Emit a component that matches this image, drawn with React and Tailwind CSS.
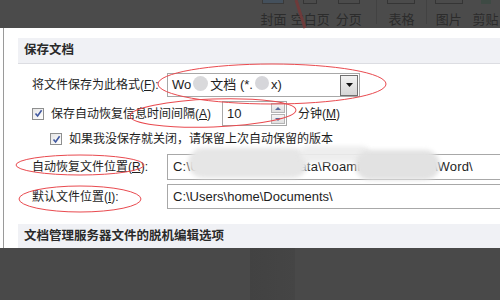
import React from 'react';

const font = "font-['Liberation_Sans','Noto_Sans_CJK_SC',sans-serif]";

function Check() {
    return (
        <span className="w-[12px] h-[12px] border border-[#8e8f8f] bg-gradient-to-br from-[#e6e6e6] to-[#ffffff] flex items-center justify-center shrink-0">
            <svg width="9" height="9" viewBox="0 0 9 9"><path d="M1.5 4.5 L3.6 7 L7.6 1.3" fill="none" stroke="#4058a0" strokeWidth="1.6" /></svg>
        </span>
    );
}

function RibbonItem({ label, w, icon }) {
    return (
        <div className="flex flex-col items-center" style={{ width: w }}>
            <div className="h-[5px] w-full flex justify-center">{icon}</div>
            <span className="mt-[8px] text-[13px] leading-[14px] text-[#2c2c2c]">{label}</span>
        </div>
    );
}

export default function App() {
    return (
        <div className={`w-[500px] h-[300px] relative overflow-hidden bg-white text-[#1e1e1e] ${font}`}>
            {/* ribbon behind the dialog */}
            <div className="h-[28px] bg-[#4b4b4b] flex pl-[258px]">
                <RibbonItem w={32} label="封面" icon={<div className="w-[22px] h-[4px] bg-[#44505c] border-b border-x border-[#3a3a3a]" />} />
                <RibbonItem w={44} label="空白页" icon={<div className="w-[14px] h-[4px] border-b border-x border-[#353535]" />} />
                <RibbonItem w={36} label="分页" icon={<div className="w-[22px] h-[4px] border-b border-x border-[#353535]" />} />
                <div className="w-px h-[24px] bg-[#424242] ml-[10px]" />
                <RibbonItem w={50} label="表格" icon={<div className="w-[28px] h-[4px] border-b border-x border-[#353535]" />} />
                <div className="w-px h-[24px] bg-[#424242]" />
                <RibbonItem w={46} label="图片" icon={<div className="w-[28px] h-[4px] border-b border-x border-[#353535]" />} />
                <RibbonItem w={30} label="剪贴" icon={<div className="w-[10px] h-[4px] bg-[#3e4a44]" />} />
            </div>

            {/* dialog body */}
            <div className="h-[220px] flex">
                <div className="w-[4px] border-r border-[#9a9a9a] shrink-0" />
                <div className="flex-1 pl-[14px] pt-[10px] text-[12px]">
                    <div className="h-[26px] bg-[#f0f1f5] border-b border-[#dcdde2] flex items-center pl-[6px] font-bold text-[12.5px] text-[#2a2a2a]">
                        保存文档
                    </div>

                    <div className="pl-[14px]">
                        <div className="mt-[9px] flex items-center h-[24px]">
                            <span className="w-[135px]">将文件保存为此格式(<u>F</u>):</span>
                            <div className="w-[193px] h-[24px] border border-[#a8a8a8] flex items-center justify-between pl-[4px] pr-[1px]">
                                <span className="text-[13px] flex items-center">
                                    Wo
                                    <span className="inline-block w-[15px] h-[15px] rounded-full bg-[#d9d9db] mx-[2px] -mt-[3px]" />
                                    文档 (*.
                                    <span className="inline-block w-[14px] h-[14px] rounded-full bg-[#d6d6da] mx-[2px] -mt-[4px]" />
                                    x)
                                </span>
                                <div className="w-[18px] h-[21px] border border-[#707070] bg-gradient-to-b from-[#f2f2f2] to-[#d6d6d6] flex items-center justify-center">
                                    <svg width="7" height="4" viewBox="0 0 7 4"><path d="M0 0 H7 L3.5 4 Z" fill="#111" /></svg>
                                </div>
                            </div>
                        </div>

                        <div className="mt-[4px] flex items-center h-[25px]">
                            <Check />
                            <span className="ml-[7px] w-[171px]">保存自动恢复信息时间间隔(<u>A</u>)</span>
                            <div className="w-[65px] h-[25px] border border-[#a8a8a8] flex items-center justify-between pl-[4px] pr-[1px]">
                                <span className="text-[13px]">10</span>
                                <div className="flex flex-col gap-px">
                                    <div className="w-[14px] h-[10px] border border-[#b4b4b4] bg-gradient-to-b from-[#f4f4f4] to-[#e0e0e0] flex items-center justify-center">
                                        <svg width="6" height="3" viewBox="0 0 6 3"><path d="M0 3 H6 L3 0 Z" fill="#5a6a9a" /></svg>
                                    </div>
                                    <div className="w-[14px] h-[10px] border border-[#b4b4b4] bg-gradient-to-b from-[#f4f4f4] to-[#e0e0e0] flex items-center justify-center">
                                        <svg width="6" height="3" viewBox="0 0 6 3"><path d="M0 0 H6 L3 3 Z" fill="#5a6a9a" /></svg>
                                    </div>
                                </div>
                            </div>
                            <span className="ml-[11px]">分钟(<u>M</u>)</span>
                        </div>

                        <div className="mt-[5px] flex items-center h-[16px] pl-[18px]">
                            <Check />
                            <span className="ml-[7px]">如果我没保存就关闭，请保留上次自动保留的版本</span>
                        </div>

                        <div className="mt-[7px] flex items-center h-[26px]">
                            <span className="w-[135px]">自动恢复文件位置(<u>R</u>):</span>
                            <div className="flex-1 h-[26px] border-y border-l border-[#a8a8a8] flex items-center pl-[5px] text-[13px] tracking-[0.2px] whitespace-nowrap overflow-hidden">
                                C:\Users\home\AppData\Roaming\Microsoft\Word\
                            </div>
                        </div>

                        <div className="mt-[4px] flex items-center h-[25px]">
                            <span className="w-[135px]">默认文件位置(<u>I</u>):</span>
                            <div className="flex-1 h-[25px] border-y border-l border-[#a8a8a8] flex items-center pl-[5px] text-[13px] whitespace-nowrap overflow-hidden">
                                C:\Users\home\Documents\
                            </div>
                        </div>
                    </div>

                    <div className="mt-[15px] h-[24px] bg-[#f0f1f5] flex items-center pl-[6px] font-bold text-[12.5px] text-[#2a2a2a]">
                        文档管理服务器文件的脱机编辑选项
                    </div>
                </div>
            </div>

            {/* area below the dialog */}
            <div className="h-[52px] flex">
                <div className="w-[250px] bg-[#494949]" />
                <div className="w-[45px] bg-gradient-to-r from-[#424242] to-[#454545]" />
                <div className="flex-1 bg-[#494949]" />
            </div>

            {/* blur smudge over the path */}
            <div className="absolute left-[188px] top-[148px] w-[120px] h-[30px] rounded-full bg-[#e6e6e6] blur-[2px]" />
            <div className="absolute left-[300px] top-[146px] w-[70px] h-[16px] rounded-full bg-[#ececec]/90 blur-[2px]" />
            <div className="absolute left-[355px] top-[150px] w-[85px] h-[30px] rounded-full bg-[#e2e2e2] blur-[2px]" />

            {/* red hand-drawn marks */}
            <svg className="absolute inset-0 pointer-events-none" width="500" height="300">
                <line x1="296" y1="0" x2="305" y2="28" stroke="#6e3a3a" strokeWidth="3" />
                <ellipse cx="272" cy="84" rx="114" ry="20" fill="none" stroke="#e94a4f" strokeWidth="1" />
                <ellipse cx="213" cy="113" rx="83" ry="14" fill="none" stroke="#e94a4f" strokeWidth="1" transform="rotate(-2 213 113)" />
                <ellipse cx="80" cy="165" rx="64" ry="10" fill="none" stroke="#e94a4f" strokeWidth="1" />
                <ellipse cx="80" cy="199" rx="61" ry="13" fill="none" stroke="#e94a4f" strokeWidth="1" />
            </svg>
        </div>
    );
}
